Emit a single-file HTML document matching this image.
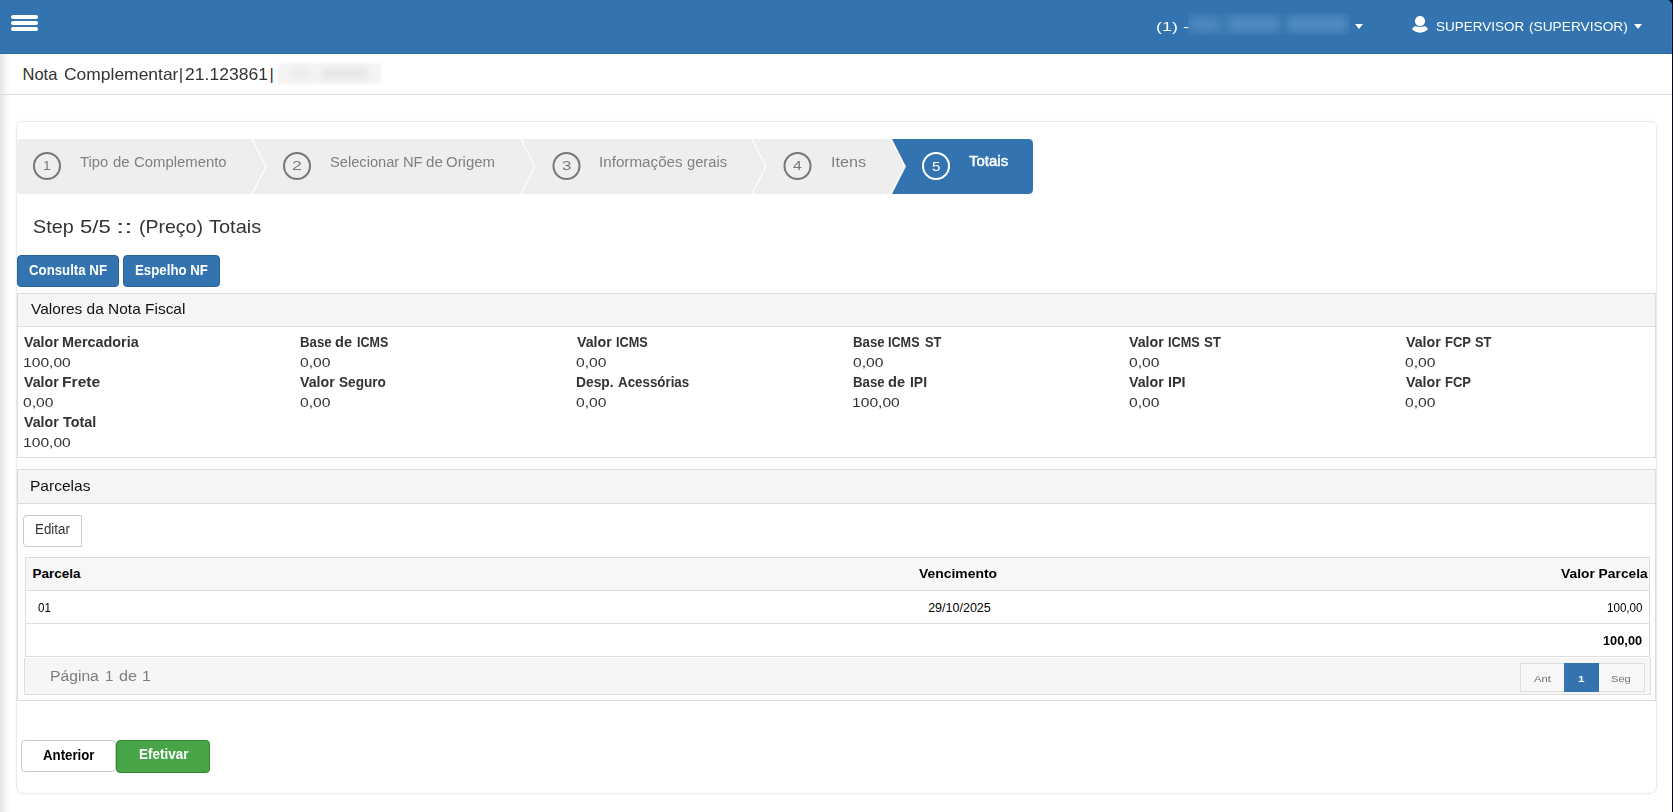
<!DOCTYPE html>
<html><head><meta charset="utf-8"><title>Nota Complementar</title>
<style>
html,body{margin:0;padding:0;width:1673px;height:812px;overflow:hidden;background:#fff;}
body{position:relative;font-family:"Liberation Sans",sans-serif;}
.b{position:absolute;box-sizing:content-box;}
.t{position:absolute;white-space:nowrap;transform-origin:0 0;}
</style></head><body>
<div class="b" style="left:0;top:54px;width:12px;height:758px;background:linear-gradient(to right,#e4e4e4,#f3f3f3 40%,#fdfdfd 80%,#fff)"></div>
<div class="b" style="left:1662px;top:0px;width:11px;height:11px;background:#05081a;"></div>
<div class="b" style="left:0px;top:0px;width:1672px;height:54px;background:#3273b0;border-top-right-radius:5px;"></div>
<div class="b" style="left:0px;top:53px;width:1672px;height:1px;background:#2c6aa6;"></div>
<div class="b" style="left:1671px;top:4px;width:1px;height:49px;background:#3b7dba"></div>
<div class="b" style="left:11px;top:14.5px;width:27px;height:4.2px;background:#fff;border-radius:2px"></div>
<div class="b" style="left:11px;top:21px;width:27px;height:4.2px;background:#fff;border-radius:2px"></div>
<div class="b" style="left:11px;top:27.3px;width:27px;height:4.2px;background:#fff;border-radius:2px"></div>
<div class="b" style="left:1188px;top:13px;width:162px;height:22px;overflow:hidden;background:#3777b3"><div style="position:absolute;left:2px;top:5px;width:30px;height:13px;background:#4f89c0;filter:blur(4px)"></div><div style="position:absolute;left:40px;top:4px;width:50px;height:14px;background:#548cc2;filter:blur(4px)"></div><div style="position:absolute;left:100px;top:4px;width:58px;height:14px;background:#548cc2;filter:blur(4px)"></div></div>
<div class="b" style="left:1355px;top:24px;width:0;height:0;border-left:4px solid transparent;border-right:4px solid transparent;border-top:5px solid #fff"></div>
<div class="b" style="left:1634px;top:24px;width:0;height:0;border-left:4px solid transparent;border-right:4px solid transparent;border-top:5px solid #fff"></div>
<svg class="b" style="left:1405px;top:10px" width="30" height="30" viewBox="0 0 30 30"><circle cx="15" cy="11.1" r="5.1" fill="#fff"/><path d="M10 15.9 Q15 18 20 15.9 L22.8 18.6 Q23 21.5 15 22.7 Q7 21.5 7.2 18.6 Z" fill="#fff"/></svg>
<div class="b" style="left:1672px;top:0px;width:1px;height:812px;background:#05081a;"></div>
<div class="b" style="left:277px;top:63px;width:104px;height:21px;background:#f4f4f4;filter:blur(1.5px)"></div>
<div class="b" style="left:290px;top:68px;width:20px;height:10px;background:#ececec;filter:blur(3px)"></div>
<div class="b" style="left:322px;top:68px;width:45px;height:11px;background:#e6e6e6;filter:blur(3px)"></div>
<div class="b" style="left:0px;top:94px;width:1672px;height:1px;background:#dcdcdc;"></div>
<div class="b" style="left:16px;top:121px;width:1639px;height:671px;border:1px solid #ebebeb;border-radius:7px;background:#fff;box-shadow:0 0 3px rgba(0,0,0,0.045)"></div>
<svg class="b" style="left:0;top:0" width="1673" height="812"><path d="M21 139 H1033 V194 H21 Q17 194 17 190 V143 Q17 139 21 139Z" fill="#eeeeee"/><path d="M892 139 H1028 Q1033 139 1033 144 V189 Q1033 194 1028 194 H892 L906 166.5Z" fill="#3273b0"/><polyline points="252,139 266,166.5 252,194" fill="none" stroke="#fff" stroke-width="1.1"/><polyline points="521,139 535,166.5 521,194" fill="none" stroke="#fff" stroke-width="1.1"/><polyline points="752,139 766,166.5 752,194" fill="none" stroke="#fff" stroke-width="1.1"/><polyline points="890.5,139 904.5,166.5 890.5,194" fill="none" stroke="#fff" stroke-width="1.1"/><circle cx="47" cy="166" r="13" fill="none" stroke="#777" stroke-width="2"/><circle cx="297" cy="166" r="13" fill="none" stroke="#777" stroke-width="2"/><circle cx="566.5" cy="166" r="13" fill="none" stroke="#777" stroke-width="2"/><circle cx="797.5" cy="166" r="13" fill="none" stroke="#777" stroke-width="2"/><circle cx="936" cy="166" r="13" fill="none" stroke="#fff" stroke-width="2"/></svg>
<div class="b" style="left:17px;top:255px;width:100px;height:30px;background:#3273b0;border:1px solid #2b62a0;border-radius:4px"></div>
<div class="b" style="left:123px;top:255px;width:95px;height:30px;background:#3273b0;border:1px solid #2b62a0;border-radius:4px"></div>
<div class="b" style="left:17px;top:293px;width:1637px;height:163px;border:1px solid #dddddd;background:#fff"></div>
<div class="b" style="left:18px;top:294px;width:1637px;height:32px;background:#f5f5f5;border-bottom:1px solid #dddddd"></div>
<div class="b" style="left:17px;top:469px;width:1637px;height:230px;border:1px solid #dddddd;background:#fff"></div>
<div class="b" style="left:18px;top:470px;width:1637px;height:33px;background:#f5f5f5;border-bottom:1px solid #dddddd"></div>
<div class="b" style="left:23px;top:515px;width:57px;height:30px;border:1px solid #ccc;border-radius:4px 0 0 4px;background:#fff"></div>
<div class="b" style="left:25px;top:557px;width:1623px;height:98px;border:1px solid #dddddd;background:#fff"></div>
<div class="b" style="left:26px;top:558px;width:1623px;height:32px;background:#f7f7f7;border-bottom:1px solid #dddddd"></div>
<div class="b" style="left:26px;top:623px;width:1623px;height:1px;background:#dddddd;"></div>
<div class="b" style="left:24px;top:658px;width:1625px;height:36px;background:#f6f6f6;border-left:1px solid #dddddd;border-bottom:1px solid #dddddd;border-right:1px solid #dddddd"></div>
<div class="b" style="left:1520px;top:663px;width:123px;height:27px;border:1px solid #dddddd;background:#f7f7f7"></div>
<div class="b" style="left:1564px;top:663px;width:35px;height:29px;background:#3273b0"></div>
<div class="b" style="left:21px;top:740px;width:93px;height:30px;border:1px solid #ccc;border-radius:4px;background:#fff"></div>
<div class="b" style="left:116px;top:740px;width:92px;height:31px;border:1px solid #2d8a2d;border-radius:4px;background:#47a447"></div>
<span class="t" style="left:1155.92px;top:20.00px;font-size:13px;line-height:13px;font-weight:normal;color:#fff;transform:scaleX(1.3784);">(1) -</span>
<span class="t" style="left:1436.29px;top:20.00px;font-size:13px;line-height:13px;font-weight:normal;color:#fff;transform:scaleX(1.0372);">SUPERVISOR</span>
<span class="t" style="left:1528.98px;top:20.00px;font-size:13px;line-height:13px;font-weight:normal;color:#fff;transform:scaleX(1.0550);">(SUPERVISOR)</span>
<span class="t" style="left:22.48px;top:66.03px;font-size:16.5px;line-height:16.5px;font-weight:normal;color:#333;">Nota</span>
<span class="t" style="left:63.93px;top:66.03px;font-size:16.5px;line-height:16.5px;font-weight:normal;color:#333;transform:scaleX(1.0571);">Complementar</span>
<span class="t" style="left:178.71px;top:66.03px;font-size:16.5px;line-height:16.5px;font-weight:normal;color:#333;">|</span>
<span class="t" style="left:185.12px;top:66.03px;font-size:16.5px;line-height:16.5px;font-weight:normal;color:#333;transform:scaleX(1.0629);">21.123861</span>
<span class="t" style="left:269.51px;top:66.03px;font-size:16.5px;line-height:16.5px;font-weight:normal;color:#333;">|</span>
<span class="t" style="left:42.97px;top:159.84px;font-size:12px;line-height:12px;font-weight:normal;color:#777;transform:scaleX(1.1494);">1</span>
<span class="t" style="left:292.12px;top:159.84px;font-size:12px;line-height:12px;font-weight:normal;color:#777;transform:scaleX(1.4652);">2</span>
<span class="t" style="left:561.83px;top:159.84px;font-size:12px;line-height:12px;font-weight:normal;color:#777;transform:scaleX(1.4035);">3</span>
<span class="t" style="left:793.18px;top:159.84px;font-size:12px;line-height:12px;font-weight:normal;color:#777;transform:scaleX(1.3201);">4</span>
<span class="t" style="left:932.19px;top:159.80px;font-size:13px;line-height:13px;font-weight:normal;color:#fff;transform:scaleX(1.1660);">5</span>
<span class="t" style="left:80.40px;top:154.65px;font-size:14px;line-height:14px;font-weight:normal;color:#808080;transform:scaleX(1.0569);">Tipo</span>
<span class="t" style="left:113.10px;top:154.65px;font-size:14px;line-height:14px;font-weight:normal;color:#808080;transform:scaleX(1.0662);">de</span>
<span class="t" style="left:133.56px;top:154.65px;font-size:14px;line-height:14px;font-weight:normal;color:#808080;transform:scaleX(1.0630);">Complemento</span>
<span class="t" style="left:330.24px;top:154.65px;font-size:14px;line-height:14px;font-weight:normal;color:#808080;transform:scaleX(1.0469);">Selecionar</span>
<span class="t" style="left:403.42px;top:154.65px;font-size:14px;line-height:14px;font-weight:normal;color:#808080;transform:scaleX(1.0508);">NF</span>
<span class="t" style="left:426.09px;top:154.65px;font-size:14px;line-height:14px;font-weight:normal;color:#808080;transform:scaleX(1.0871);">de</span>
<span class="t" style="left:446.43px;top:154.65px;font-size:14px;line-height:14px;font-weight:normal;color:#808080;transform:scaleX(1.0680);">Origem</span>
<span class="t" style="left:598.83px;top:154.65px;font-size:14px;line-height:14px;font-weight:normal;color:#808080;transform:scaleX(1.0860);">Informações</span>
<span class="t" style="left:686.91px;top:154.65px;font-size:14px;line-height:14px;font-weight:normal;color:#808080;transform:scaleX(1.0485);">gerais</span>
<span class="t" style="left:830.55px;top:154.65px;font-size:14px;line-height:14px;font-weight:normal;color:#808080;transform:scaleX(1.1526);">Itens</span>
<span class="t" style="left:969.40px;top:154.05px;font-size:14px;line-height:14px;font-weight:normal;color:#fff;transform:scaleX(1.0707);-webkit-text-stroke:0.45px #fff;">Totais</span>
<span class="t" style="left:33.31px;top:217.54px;font-size:18.5px;line-height:18.5px;font-weight:normal;color:#333;transform:scaleX(1.0674);">Step</span>
<span class="t" style="left:80.12px;top:217.54px;font-size:18.5px;line-height:18.5px;font-weight:normal;color:#333;transform:scaleX(1.1925);">5/5</span>
<span class="t" style="left:115.99px;top:217.54px;font-size:18.5px;line-height:18.5px;font-weight:normal;color:#333;transform:scaleX(1.6288);">::</span>
<span class="t" style="left:139.33px;top:217.54px;font-size:18.5px;line-height:18.5px;font-weight:normal;color:#333;transform:scaleX(1.0537);">(Preço)</span>
<span class="t" style="left:208.60px;top:217.54px;font-size:18.5px;line-height:18.5px;font-weight:normal;color:#333;transform:scaleX(1.0811);">Totais</span>
<span class="t" style="left:28.87px;top:263.35px;font-size:14px;line-height:14px;font-weight:bold;color:#fff;transform:scaleX(0.9458);">Consulta NF</span>
<span class="t" style="left:134.74px;top:263.35px;font-size:14px;line-height:14px;font-weight:bold;color:#fff;transform:scaleX(0.9471);">Espelho NF</span>
<span class="t" style="left:30.92px;top:301.20px;font-size:15px;line-height:15px;font-weight:normal;color:#111;transform:scaleX(1.0308);">Valores da Nota Fiscal</span>
<span class="t" style="left:23.93px;top:334.48px;font-size:15.5px;line-height:15.5px;font-weight:bold;color:#333;transform:scaleX(0.9179);">Valor</span>
<span class="t" style="left:61.97px;top:334.48px;font-size:15.5px;line-height:15.5px;font-weight:bold;color:#333;transform:scaleX(0.9274);">Mercadoria</span>
<span class="t" style="left:299.64px;top:334.48px;font-size:15.5px;line-height:15.5px;font-weight:bold;color:#333;transform:scaleX(0.8536);">Base</span>
<span class="t" style="left:335.42px;top:334.48px;font-size:15.5px;line-height:15.5px;font-weight:bold;color:#333;transform:scaleX(0.9411);">de</span>
<span class="t" style="left:356.99px;top:334.48px;font-size:15.5px;line-height:15.5px;font-weight:bold;color:#333;transform:scaleX(0.8065);">ICMS</span>
<span class="t" style="left:576.63px;top:334.48px;font-size:15.5px;line-height:15.5px;font-weight:bold;color:#333;transform:scaleX(0.9179);">Valor</span>
<span class="t" style="left:615.67px;top:334.48px;font-size:15.5px;line-height:15.5px;font-weight:bold;color:#333;transform:scaleX(0.8199);">ICMS</span>
<span class="t" style="left:852.64px;top:334.48px;font-size:15.5px;line-height:15.5px;font-weight:bold;color:#333;transform:scaleX(0.8536);">Base</span>
<span class="t" style="left:888.18px;top:334.48px;font-size:15.5px;line-height:15.5px;font-weight:bold;color:#333;transform:scaleX(0.8145);">ICMS</span>
<span class="t" style="left:924.51px;top:334.48px;font-size:15.5px;line-height:15.5px;font-weight:bold;color:#333;transform:scaleX(0.8306);">ST</span>
<span class="t" style="left:1129.33px;top:334.48px;font-size:15.5px;line-height:15.5px;font-weight:bold;color:#333;transform:scaleX(0.9179);">Valor</span>
<span class="t" style="left:1168.07px;top:334.48px;font-size:15.5px;line-height:15.5px;font-weight:bold;color:#333;transform:scaleX(0.8199);">ICMS</span>
<span class="t" style="left:1203.80px;top:334.48px;font-size:15.5px;line-height:15.5px;font-weight:bold;color:#333;transform:scaleX(0.8567);">ST</span>
<span class="t" style="left:1405.93px;top:334.48px;font-size:15.5px;line-height:15.5px;font-weight:bold;color:#333;transform:scaleX(0.9179);">Valor</span>
<span class="t" style="left:1444.76px;top:334.48px;font-size:15.5px;line-height:15.5px;font-weight:bold;color:#333;transform:scaleX(0.8365);">FCP</span>
<span class="t" style="left:1474.81px;top:334.48px;font-size:15.5px;line-height:15.5px;font-weight:bold;color:#333;transform:scaleX(0.8306);">ST</span>
<span class="t" style="left:22.83px;top:357.16px;font-size:12.8px;line-height:12.8px;font-weight:normal;color:#333;transform:scaleX(1.2209);">100,00</span>
<span class="t" style="left:299.77px;top:357.16px;font-size:12.8px;line-height:12.8px;font-weight:normal;color:#333;transform:scaleX(1.2241);">0,00</span>
<span class="t" style="left:576.07px;top:357.16px;font-size:12.8px;line-height:12.8px;font-weight:normal;color:#333;transform:scaleX(1.2241);">0,00</span>
<span class="t" style="left:852.67px;top:357.16px;font-size:12.8px;line-height:12.8px;font-weight:normal;color:#333;transform:scaleX(1.2241);">0,00</span>
<span class="t" style="left:1128.97px;top:357.16px;font-size:12.8px;line-height:12.8px;font-weight:normal;color:#333;transform:scaleX(1.2241);">0,00</span>
<span class="t" style="left:1405.37px;top:357.16px;font-size:12.8px;line-height:12.8px;font-weight:normal;color:#333;transform:scaleX(1.2241);">0,00</span>
<span class="t" style="left:23.93px;top:374.48px;font-size:15.5px;line-height:15.5px;font-weight:bold;color:#333;transform:scaleX(0.9179);">Valor</span>
<span class="t" style="left:61.98px;top:374.48px;font-size:15.5px;line-height:15.5px;font-weight:bold;color:#333;transform:scaleX(1.0097);">Frete</span>
<span class="t" style="left:300.33px;top:374.48px;font-size:15.5px;line-height:15.5px;font-weight:bold;color:#333;transform:scaleX(0.9179);">Valor</span>
<span class="t" style="left:338.89px;top:374.48px;font-size:15.5px;line-height:15.5px;font-weight:bold;color:#333;transform:scaleX(0.8793);">Seguro</span>
<span class="t" style="left:576.10px;top:374.48px;font-size:15.5px;line-height:15.5px;font-weight:bold;color:#333;transform:scaleX(0.8918);">Desp.</span>
<span class="t" style="left:617.87px;top:374.48px;font-size:15.5px;line-height:15.5px;font-weight:bold;color:#333;transform:scaleX(0.8606);">Acessórias</span>
<span class="t" style="left:852.64px;top:374.48px;font-size:15.5px;line-height:15.5px;font-weight:bold;color:#333;transform:scaleX(0.8536);">Base</span>
<span class="t" style="left:888.42px;top:374.48px;font-size:15.5px;line-height:15.5px;font-weight:bold;color:#333;transform:scaleX(0.9411);">de</span>
<span class="t" style="left:909.89px;top:374.48px;font-size:15.5px;line-height:15.5px;font-weight:bold;color:#333;transform:scaleX(0.8997);">IPI</span>
<span class="t" style="left:1129.33px;top:374.48px;font-size:15.5px;line-height:15.5px;font-weight:bold;color:#333;transform:scaleX(0.9179);">Valor</span>
<span class="t" style="left:1167.96px;top:374.48px;font-size:15.5px;line-height:15.5px;font-weight:bold;color:#333;transform:scaleX(0.9293);">IPI</span>
<span class="t" style="left:1405.93px;top:374.48px;font-size:15.5px;line-height:15.5px;font-weight:bold;color:#333;transform:scaleX(0.9179);">Valor</span>
<span class="t" style="left:1444.76px;top:374.48px;font-size:15.5px;line-height:15.5px;font-weight:bold;color:#333;transform:scaleX(0.8365);">FCP</span>
<span class="t" style="left:23.37px;top:397.16px;font-size:12.8px;line-height:12.8px;font-weight:normal;color:#333;transform:scaleX(1.2241);">0,00</span>
<span class="t" style="left:299.77px;top:397.16px;font-size:12.8px;line-height:12.8px;font-weight:normal;color:#333;transform:scaleX(1.2241);">0,00</span>
<span class="t" style="left:576.07px;top:397.16px;font-size:12.8px;line-height:12.8px;font-weight:normal;color:#333;transform:scaleX(1.2241);">0,00</span>
<span class="t" style="left:852.13px;top:397.16px;font-size:12.8px;line-height:12.8px;font-weight:normal;color:#333;transform:scaleX(1.2209);">100,00</span>
<span class="t" style="left:1128.97px;top:397.16px;font-size:12.8px;line-height:12.8px;font-weight:normal;color:#333;transform:scaleX(1.2241);">0,00</span>
<span class="t" style="left:1405.37px;top:397.16px;font-size:12.8px;line-height:12.8px;font-weight:normal;color:#333;transform:scaleX(1.2241);">0,00</span>
<span class="t" style="left:23.93px;top:414.48px;font-size:15.5px;line-height:15.5px;font-weight:bold;color:#333;transform:scaleX(0.9179);">Valor</span>
<span class="t" style="left:62.86px;top:414.48px;font-size:15.5px;line-height:15.5px;font-weight:bold;color:#333;transform:scaleX(0.9266);">Total</span>
<span class="t" style="left:22.83px;top:437.16px;font-size:12.8px;line-height:12.8px;font-weight:normal;color:#333;transform:scaleX(1.2209);">100,00</span>
<span class="t" style="left:30.36px;top:478.30px;font-size:15px;line-height:15px;font-weight:normal;color:#111;transform:scaleX(1.0349);">Parcelas</span>
<span class="t" style="left:34.83px;top:521.95px;font-size:14px;line-height:14px;font-weight:normal;color:#333;transform:scaleX(0.9543);">Editar</span>
<span class="t" style="left:32.42px;top:566.67px;font-size:13.5px;line-height:13.5px;font-weight:bold;color:#000;">Parcela</span>
<span class="t" style="left:918.93px;top:566.57px;font-size:13.5px;line-height:13.5px;font-weight:bold;color:#000;transform:scaleX(1.0302);">Vencimento</span>
<span class="t" style="left:1561.13px;top:566.67px;font-size:13.5px;line-height:13.5px;font-weight:bold;color:#000;transform:scaleX(1.0230);">Valor Parcela</span>
<span class="t" style="left:38.14px;top:602.12px;font-size:12.5px;line-height:12.5px;font-weight:normal;color:#000;transform:scaleX(0.9288);">01</span>
<span class="t" style="left:928.18px;top:601.92px;font-size:12.5px;line-height:12.5px;font-weight:normal;color:#000;">29/10/2025</span>
<span class="t" style="left:1606.53px;top:602.42px;font-size:12.5px;line-height:12.5px;font-weight:normal;color:#000;transform:scaleX(0.9275);">100,00</span>
<span class="t" style="left:1602.93px;top:634.52px;font-size:12.5px;line-height:12.5px;font-weight:bold;color:#000;transform:scaleX(1.0243);">100,00</span>
<span class="t" style="left:50.35px;top:667.88px;font-size:15.5px;line-height:15.5px;font-weight:normal;color:#7d7d7d;transform:scaleX(1.0119);">Página</span>
<span class="t" style="left:104.96px;top:667.88px;font-size:15.5px;line-height:15.5px;font-weight:normal;color:#7d7d7d;transform:scaleX(0.9789);">1</span>
<span class="t" style="left:119.35px;top:667.88px;font-size:15.5px;line-height:15.5px;font-weight:normal;color:#7d7d7d;transform:scaleX(1.0511);">de</span>
<span class="t" style="left:142.41px;top:667.88px;font-size:15.5px;line-height:15.5px;font-weight:normal;color:#7d7d7d;transform:scaleX(1.0234);">1</span>
<span class="t" style="left:1534.20px;top:674.26px;font-size:9.5px;line-height:9.5px;font-weight:normal;color:#6f6f6f;transform:scaleX(1.1829);">Ant</span>
<span class="t" style="left:1577.80px;top:674.26px;font-size:9.5px;line-height:9.5px;font-weight:bold;color:#fff;transform:scaleX(1.2318);">1</span>
<span class="t" style="left:1611.40px;top:674.26px;font-size:9.5px;line-height:9.5px;font-weight:normal;color:#6f6f6f;transform:scaleX(1.1661);">Seg</span>
<span class="t" style="left:42.67px;top:747.95px;font-size:14px;line-height:14px;font-weight:bold;color:#000;transform:scaleX(0.9462);">Anterior</span>
<span class="t" style="left:138.52px;top:747.35px;font-size:14px;line-height:14px;font-weight:bold;color:#fff;transform:scaleX(0.9630);">Efetivar</span>
</body></html>
